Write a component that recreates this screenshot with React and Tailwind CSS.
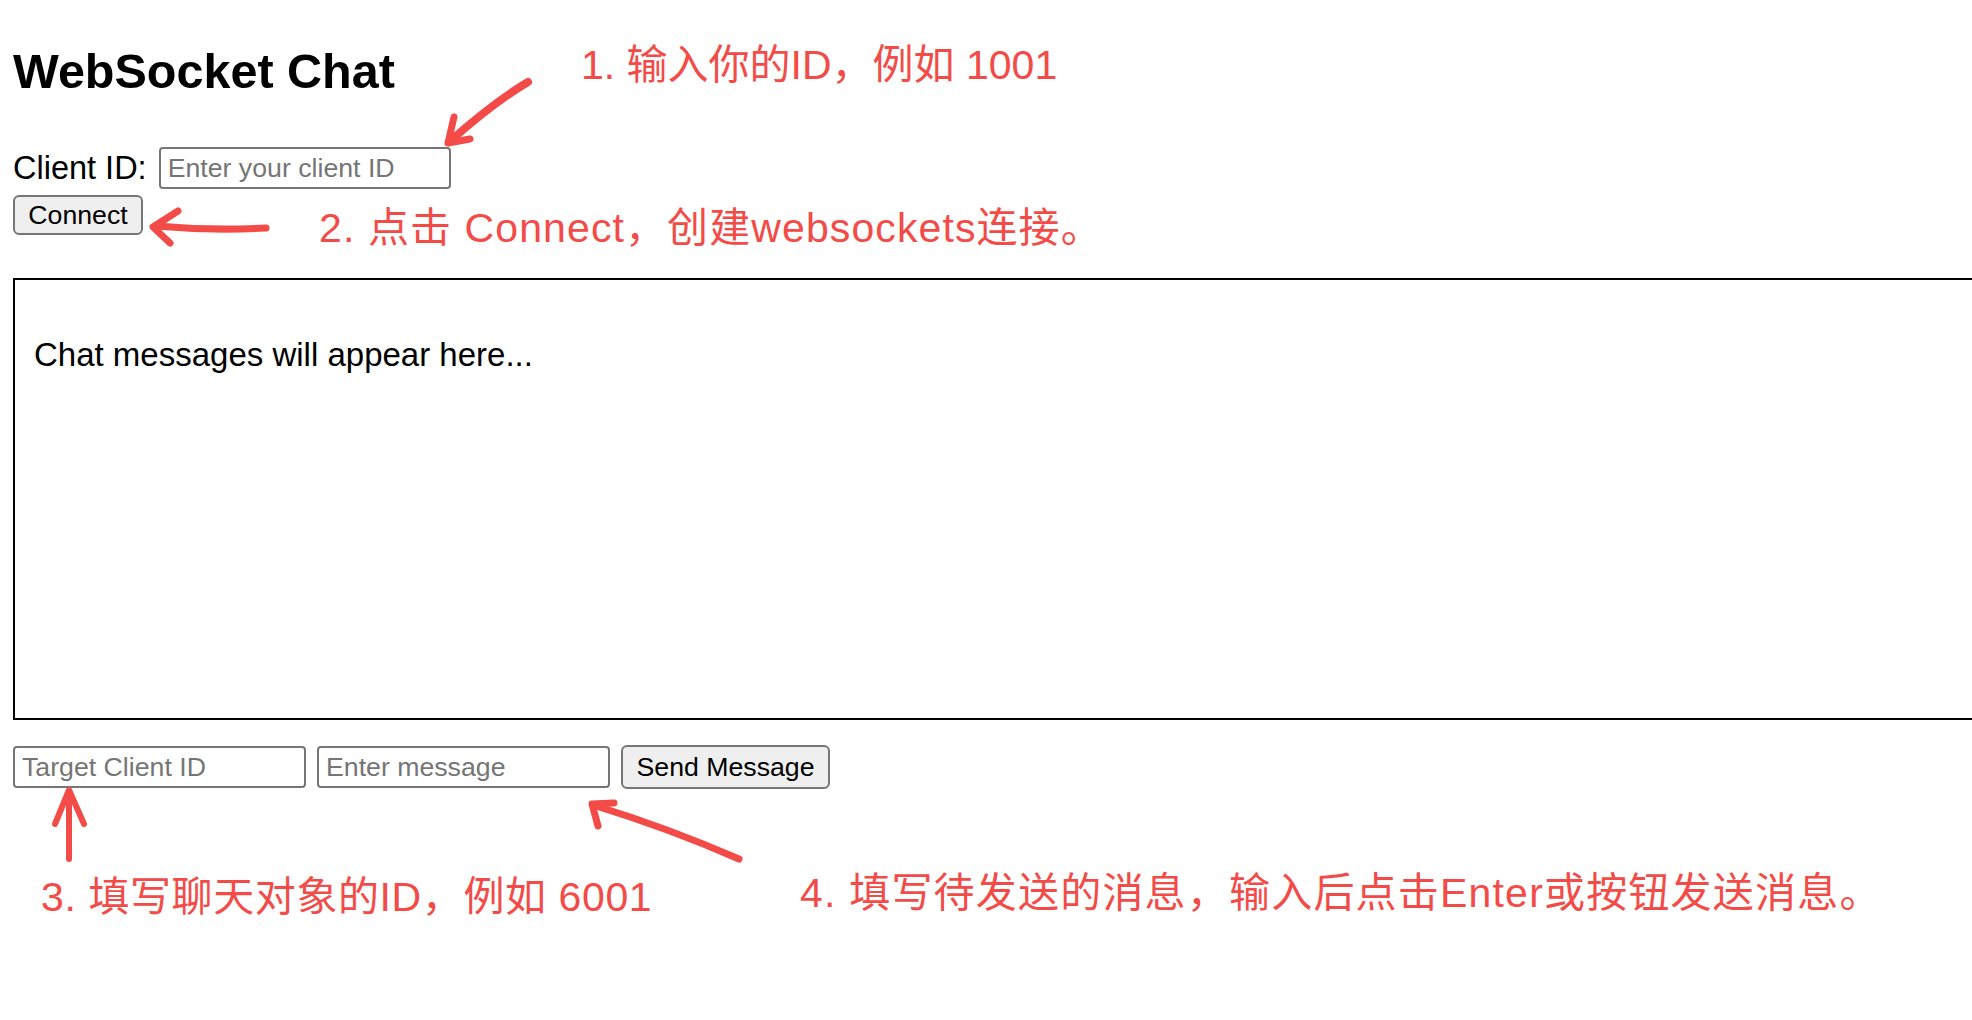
import React from "react";

const RED = "#f34b47";

function Arrows() {
  return (
    <svg
      className="absolute inset-0 pointer-events-none"
      width="1972"
      height="1020"
      viewBox="0 0 1972 1020"
      fill="none"
      stroke={RED}
      strokeLinecap="round"
      strokeLinejoin="round"
    >
      {/* arrow 1 */}
      <path d="M528 82 Q494 102 449 142" strokeWidth="8" />
      <path d="M454 117 L448 143 L470 139" strokeWidth="7" />
      {/* arrow 2 */}
      <path d="M266 228 Q212 231 156 226" strokeWidth="7" />
      <path d="M178 211 L153 227 L170 243" strokeWidth="7" />
      {/* arrow 3 */}
      <path d="M69 859 L69 792" strokeWidth="6" />
      <path d="M55 824 L69 790 L84 824" strokeWidth="6" />
      {/* arrow 4 */}
      <path d="M739 859 Q668 828 593 805" strokeWidth="7" />
      <path d="M614 803 L592 804 L598 826" strokeWidth="7" />
    </svg>
  );
}

export default function App() {
  return (
    <div className="relative w-full h-[1020px] overflow-hidden bg-white text-black font-['Liberation_Sans','Noto_Sans_CJK_SC',sans-serif]">
      <div className="pl-[13px] pt-[44px]">
        <h2 className="text-[48.5px] font-bold leading-[55px]">WebSocket Chat</h2>

        <div className="mt-[48px] flex items-center gap-[12px]">
          <span className="text-[32.5px] leading-[37px]">Client ID:</span>
          <input
            type="text"
            placeholder="Enter your client ID"
            className="w-[292px] h-[42px] border-2 border-[#767676] rounded-[4px] px-[7px] text-[26.7px] placeholder:text-[#757575] outline-none"
          />
        </div>

        <button className="mt-[6px] block h-[40px] w-[130px] bg-[#efefef] border-2 border-[#767676] rounded-[6px] text-[26.7px] leading-none">
          Connect
        </button>

        <div className="mt-[43px] h-[442px] w-[2000px] border-2 border-black pl-[19px] pt-[56px]">
          <p className="text-[33px] leading-[37px]">Chat messages will appear here...</p>
        </div>

        <div className="mt-[25px] flex items-center gap-[11px]">
          <input
            type="text"
            placeholder="Target Client ID"
            className="w-[293px] h-[42px] border-2 border-[#767676] rounded-[4px] px-[7px] text-[26.7px] placeholder:text-[#757575] outline-none"
          />
          <input
            type="text"
            placeholder="Enter message"
            className="w-[293px] h-[42px] border-2 border-[#767676] rounded-[4px] px-[7px] text-[26.7px] placeholder:text-[#757575] outline-none"
          />
          <button className="h-[44px] w-[209px] bg-[#efefef] border-2 border-[#767676] rounded-[6px] text-[26.7px] leading-none">
            Send Message
          </button>
        </div>
      </div>

      <div className="absolute left-[581px] top-[41px] text-[41px] leading-[48px] text-[#f34b47] whitespace-nowrap">
        1. 输入你的ID，例如 1001
      </div>
      <div className="absolute left-[319px] top-[204px] text-[41px] leading-[48px] tracking-[1.1px] text-[#f34b47] whitespace-nowrap">
        2. 点击 Connect，创建websockets连接。
      </div>
      <div className="absolute left-[41px] top-[873px] text-[41px] leading-[48px] tracking-[0.6px] text-[#f34b47] whitespace-nowrap">
        3. 填写聊天对象的ID，例如 6001
      </div>
      <div className="absolute left-[800px] top-[869px] text-[41px] leading-[48px] tracking-[1.2px] text-[#f34b47] whitespace-nowrap">
        4. 填写待发送的消息，输入后点击Enter或按钮发送消息。
      </div>

      <Arrows />
    </div>
  );
}
